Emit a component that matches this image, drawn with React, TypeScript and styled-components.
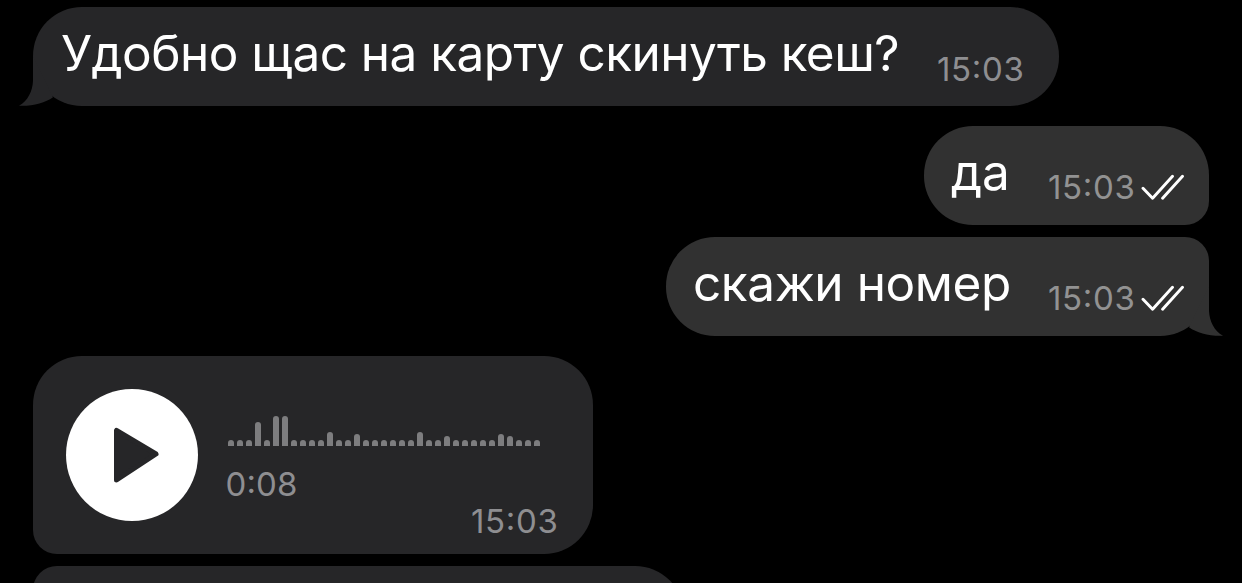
import styled, { createGlobalStyle, css } from "styled-components";

const GlobalStyle = createGlobalStyle`
  * {
    box-sizing: border-box;
  }

  body {
    margin: 0;
    background: #000;
    font-family: Inter, "Liberation Sans", sans-serif;
  }
`;

const Chat = styled.main`
  display: flex;
  flex-direction: column;
  height: 583px;
  padding: 7px 33px 0;
  overflow: hidden;
  background: #000;
`;

const Group = styled.section<{ $out?: boolean }>`
  display: flex;
  flex-direction: column;
  flex-shrink: 0;
  align-items: ${({ $out }) => ($out ? "flex-end" : "flex-start")};
  gap: 12px;
  margin-bottom: 20px;
`;

const Bubble = styled.article<{ $out?: boolean; $width: number; $radius?: string }>`
  position: relative;
  display: flex;
  justify-content: space-between;
  width: ${({ $width }) => $width}px;
  height: 99px;
  padding: 0 ${({ $out }) => ($out ? "24px 0 27px" : "35px 0 28px")};
  border-radius: ${({ $radius }) => $radius || "49px"};
  background: ${({ $out }) => ($out ? "#313131" : "#262628")};
`;

const Tail = styled.svg<{ $out?: boolean }>`
  position: absolute;
  bottom: 0;
  width: 40px;
  height: 50px;
  ${({ $out }) =>
    $out
      ? css`
          right: -14px;
          fill: #313131;
          transform: scaleX(-1);
        `
      : css`
          left: -14px;
          fill: #262628;
        `}
`;

const Text = styled.p<{ $spacing: number }>`
  margin: 16px 0 0;
  color: #fff;
  font-size: 49.5px;
  line-height: 60px;
  letter-spacing: ${({ $spacing }) => $spacing}px;
  white-space: nowrap;
`;

const Meta = styled.div<{ $out?: boolean }>`
  display: flex;
  align-items: center;
  height: 40px;
  margin-top: ${({ $out }) => ($out ? 41 : 42)}px;
  gap: 6px;
`;

const Time = styled.time<{ $out?: boolean }>`
  color: ${({ $out }) => ($out ? "#929292" : "#8e8e91")};
  font-size: 33px;
  line-height: 40px;
  letter-spacing: 0.7px;
  font-feature-settings: "case";
  margin-right: -0.6px;
`;

const Checks = styled.svg`
  width: 44px;
  height: 26px;
  fill: none;
  stroke: #fff;
  stroke-width: 2.9;
  stroke-linecap: round;
  stroke-linejoin: round;
`;

const VoiceBubble = styled(Bubble)`
  height: 198px;
  padding: 33px 35px 0 33px;
  justify-content: flex-start;
  gap: 29px;
`;

const PlayButton = styled.button`
  display: block;
  flex-shrink: 0;
  width: 132px;
  height: 132px;
  padding: 0;
  border: 0;
  border-radius: 50%;
  background: #fff;

  svg {
    display: block;
    fill: #262628;
    stroke: #262628;
    stroke-width: 5;
    stroke-linejoin: round;
  }
`;

const Track = styled.div`
  display: flex;
  flex: 1;
  flex-direction: column;
  padding-top: 27px;
`;

const Wave = styled.div`
  display: flex;
  align-items: flex-end;
  gap: 3px;
  height: 30px;
  margin: 0 0 18px 1px;
`;

const Bar = styled.span<{ $height: number }>`
  width: 6px;
  height: ${({ $height }) => $height}px;
  border-radius: 3px 3px 0 0;
  background: #7d7d7f;
`;

const Duration = styled(Time)`
  margin-left: -1.5px;
  letter-spacing: 0.1px;
`;

const VoiceTime = styled(Time)`
  align-self: flex-end;
  margin-top: -3px;
`;

const samples = [
  6, 6, 6, 24, 6, 30, 30, 6, 6, 6, 6, 14, 6, 6, 12, 6, 6, 6, 6, 6, 6, 14, 6, 6,
  10, 6, 6, 6, 6, 6, 12, 10, 6, 6, 6,
];

function BubbleTail({ out }: { out?: boolean }) {
  return (
    <Tail $out={out} viewBox="0 0 40 50" aria-hidden="true">
      <path d="M14 0V25C13.5 35.5 9 44.5 0 49.8C14 50.3 26 47 34 41.3Z" />
    </Tail>
  );
}

type MessageProps = {
  text: string;
  time: string;
  width: number;
  out?: boolean;
  tail?: boolean;
  radius?: string;
  spacing?: number;
};

function Message({ text, time, width, out, tail, radius, spacing = 0 }: MessageProps) {
  return (
    <Bubble $out={out} $width={width} $radius={radius}>
      {tail && <BubbleTail out={out} />}
      <Text $spacing={spacing}>{text}</Text>
      <Meta $out={out}>
        <Time $out={out}>{time}</Time>
        {out && (
          <Checks viewBox="0 0 44 26" aria-label="Прочитано">
            <path d="M2 14.3L11.6 24.2L31.5 2.3M21.6 24.2L41.5 2.3" />
          </Checks>
        )}
      </Meta>
    </Bubble>
  );
}

function App() {
  return (
    <>
      <GlobalStyle />
      <Chat>
        <Group>
          <Message
            text="Удобно щас на карту скинуть кеш?"
            time="15:03"
            width={1026}
            spacing={-0.54}
            tail
          />
        </Group>
        <Group $out>
          <Message text="да" time="15:03" width={285} radius="49px 49px 24px 49px" out />
          <Message
            text="скажи номер"
            time="15:03"
            width={543}
            radius="49px 24px 49px 49px"
            spacing={-0.42}
            out
            tail
          />
        </Group>
        <Group>
          <VoiceBubble $width={560} $radius="49px 49px 49px 24px">
            <PlayButton aria-label="Воспроизвести">
              <svg width="132" height="132" viewBox="0 0 132 132">
                <path d="M50.5 41.5V91L90 65Z" />
              </svg>
            </PlayButton>
            <Track>
              <Wave>
                {samples.map((height, i) => (
                  <Bar key={i} $height={height} />
                ))}
              </Wave>
              <Duration>0:08</Duration>
              <VoiceTime>15:03</VoiceTime>
            </Track>
          </VoiceBubble>
          <Bubble $width={651} $radius="24px 49px 49px 24px" />
        </Group>
      </Chat>
    </>
  );
}

export default App;
